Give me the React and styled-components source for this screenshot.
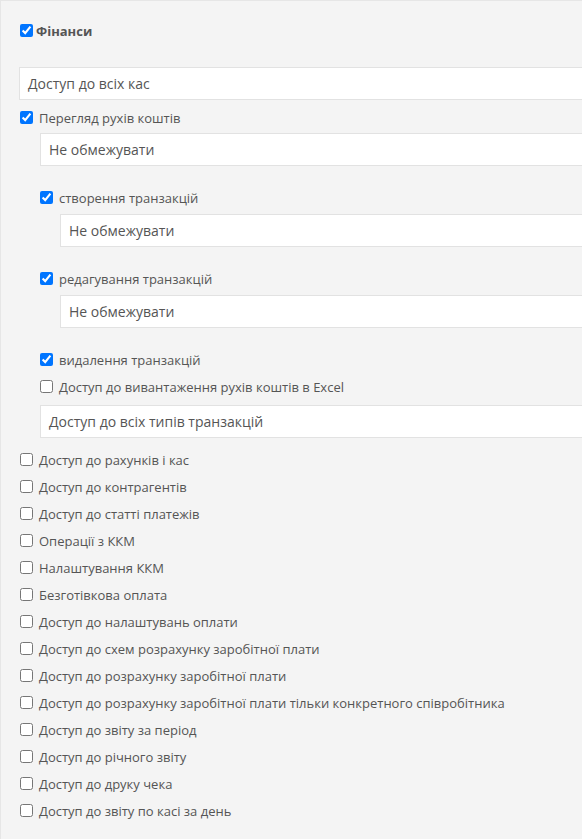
import React from "react";
import styled, { createGlobalStyle } from "styled-components";

const GlobalStyle = createGlobalStyle`
  html, body {
    margin: 0;
    padding: 0;
    overflow: hidden;
    background: #ffffff;
  }
  body {
    font-family: "Open Sans", "Liberation Sans", sans-serif;
  }
`;

const Panel = styled.div`
  width: 620px;
  min-height: 839px;
  box-sizing: border-box;
  background: #f4f4f4;
  border-top: 1px solid #e6e6e6;
  border-left: 1px solid #e6e6e6;
  padding: 16px 0 0 15px;
`;

const Group = styled.div`
  padding-left: ${p => p.indent || 0}px;
  padding-bottom: ${p => p.after || 0}px;
`;

const Row = styled.label`
  display: flex;
  align-items: center;
  height: 27px;
  margin-top: ${p => p.gap || 0}px;
  color: #555;
  font-size: 13px;
  font-weight: ${p => (p.bold ? 700 : 400)};
  cursor: pointer;
`;

const Check = styled.input.attrs({ type: "checkbox" })`
  width: 13px;
  height: 13px;
  margin: 0 ${p => (p.bold ? 3 : 6)}px 0 4px;
  accent-color: #0075ff;
  flex-shrink: 0;
`;

const Caption = styled.span`
  white-space: nowrap;
`;

const Select = styled.div`
  box-sizing: border-box;
  height: 33px;
  margin-top: ${p => p.gap || 0}px;
  margin-left: ${p => p.shift || 0}px;
  background: #ffffff;
  border: 1px solid #e2e2e2;
  border-right: none;
  padding-left: 8px;
  display: flex;
  align-items: center;
  color: #555;
  font-size: 14px;
  white-space: nowrap;
`;

const Option = ({ label, checked, bold, gap }) => (
  <Row bold={bold} gap={gap}>
    <Check bold={bold} defaultChecked={checked} />
    <Caption>{label}</Caption>
  </Row>
);

const extras = [
  "Доступ до рахунків і кас",
  "Доступ до контрагентів",
  "Доступ до статті платежів",
  "Операції з ККМ",
  "Налаштування ККМ",
  "Безготівкова оплата",
  "Доступ до налаштувань оплати",
  "Доступ до схем розрахунку заробітної плати",
  "Доступ до розрахунку заробітної плати",
  "Доступ до розрахунку заробітної плати тільки конкретного співробітника",
  "Доступ до звіту за період",
  "Доступ до річного звіту",
  "Доступ до друку чека",
  "Доступ до звіту по касі за день",
];

export default function App() {
  return (
    <>
      <GlobalStyle />
      <Panel>
        <Option label="Фінанси" checked bold />
        <Select gap={23} shift={3}>Доступ до всіх кас</Select>
        <Option label="Перегляд рухів коштів" checked gap={4} />
        <Group indent={20} after={8}>
          <Select gap={2} shift={4}>Не обмежувати</Select>
          <Option label="створення транзакцій" checked gap={18} />
          <Select gap={3} shift={24}>Не обмежувати</Select>
          <Option label="редагування транзакцій" checked gap={18} />
          <Select gap={3} shift={24}>Не обмежувати</Select>
          <Option label="видалення транзакцій" checked gap={18} />
          <Option label="Доступ до вивантаження рухів коштів в Excel" />
          <Select gap={5} shift={4}>Доступ до всіх типів транзакцій</Select>
        </Group>
        {extras.map(label => (
          <Option key={label} label={label} />
        ))}
      </Panel>
    </>
  );
}
